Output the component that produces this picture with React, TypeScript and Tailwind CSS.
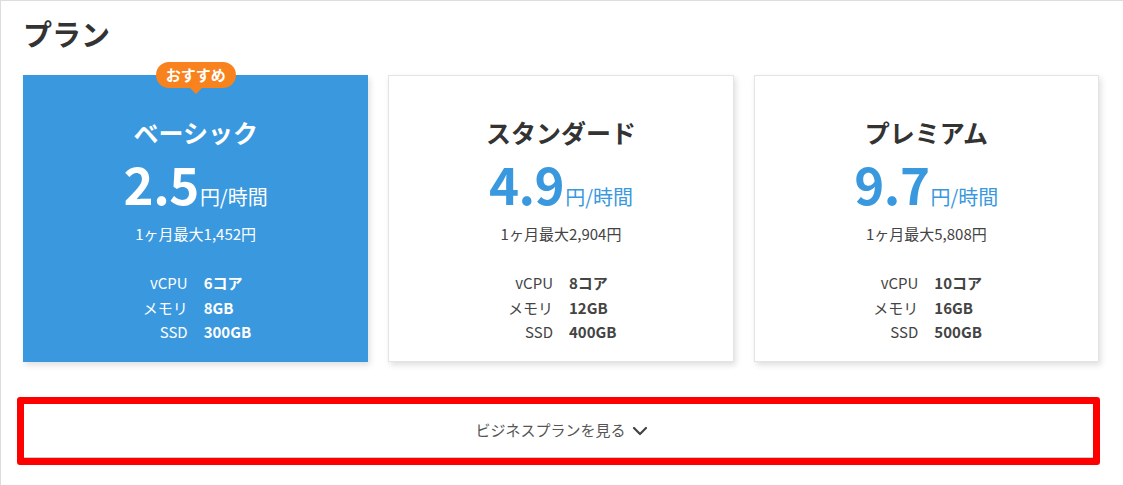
import React from "react";
import { ChevronDown } from "lucide-react";

const plans = [
  { name: "ベーシック", price: "2.5", month: "1ヶ月最大1,452円", cpu: "6コア", mem: "8GB", ssd: "300GB", featured: true },
  { name: "スタンダード", price: "4.9", month: "1ヶ月最大2,904円", cpu: "8コア", mem: "12GB", ssd: "400GB", featured: false },
  { name: "プレミアム", price: "9.7", month: "1ヶ月最大5,808円", cpu: "10コア", mem: "16GB", ssd: "500GB", featured: false },
];

const font = { fontFamily: '"Noto Sans CJK JP", "Noto Sans", sans-serif' };

export default function App() {
  return (
    <div style={font} className="w-[1123px] h-[485px] bg-white border-l border-t border-[#dddddd] overflow-hidden text-[#333]">
      <h2 className="pl-[22px] pt-[13px] text-[29px] font-bold leading-[38px] text-[#333]">プラン</h2>
      <div className="mt-[23px] ml-[22px] w-[1076px] grid grid-cols-3 gap-[20px]">
        {plans.map((p) => (
          <div
            key={p.name}
            className={
              "relative h-[287px] flex flex-col items-center pt-[41px] shadow-[2px_3px_6px_rgba(0,0,0,0.13)] " +
              (p.featured ? "bg-[#3a98de] border border-[#3a98de] text-white" : "bg-white border border-[#e4e4e4] text-[#333]")
            }
          >
            {p.featured && (
              <div className="absolute left-1/2 -translate-x-1/2 top-[-14px] flex flex-col items-center">
                <div className="w-[80px] h-[26px] rounded-full bg-[#f7821e] text-white text-[15px] font-bold leading-[26px] text-center">
                  おすすめ
                </div>
                <div className="w-0 h-0 border-l-[6px] border-r-[6px] border-t-[6px] border-l-transparent border-r-transparent border-t-[#f7821e]" />
              </div>
            )}
            <div className="text-[25px] font-bold leading-[30px]">{p.name}</div>
            <div className={"mt-[11px] flex items-baseline leading-[50px] " + (p.featured ? "text-white" : "text-[#3a98de]")}>
              <span className="text-[51px] font-bold tracking-[-0.5px]">{p.price}</span>
              <span className="text-[20px] ml-[1px]">円/時間</span>
            </div>
            <div className={"mt-[2px] text-[15px] leading-[20px] " + (p.featured ? "text-white" : "text-[#444]")}>{p.month}</div>
            <div className={"mt-[27px] grid grid-cols-2 gap-x-[16px] w-full text-[15px] leading-[24.5px] " + (p.featured ? "text-white" : "text-[#444]")}>
              <div className="text-right">vCPU</div>
              <div className="font-bold">{p.cpu}</div>
              <div className="text-right">メモリ</div>
              <div className="font-bold">{p.mem}</div>
              <div className="text-right">SSD</div>
              <div className="font-bold">{p.ssd}</div>
            </div>
          </div>
        ))}
      </div>
      <div className="mt-[35px] ml-[16px] w-[1083px] border-[7px] border-[#ff0000] rounded-[3px]">
        <button className="w-full h-[54px] bg-white border-b border-[#cccccc] flex items-center justify-center gap-[2px] pl-[10px] text-[15px] text-[#555]">
          <span>ビジネスプランを見る</span>
          <ChevronDown size={24} strokeWidth={2.2} className="text-[#444]" />
        </button>
      </div>
    </div>
  );
}
